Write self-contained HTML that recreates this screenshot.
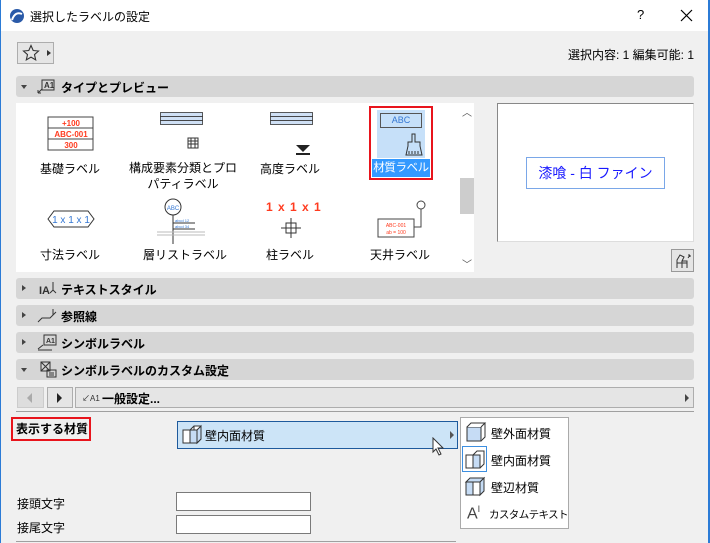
<!DOCTYPE html>
<html><head><meta charset="utf-8"><style>
*{box-sizing:border-box;margin:0;padding:0}
body{width:710px;height:543px;overflow:hidden;background:#f0f0f0;font-family:"Liberation Sans","Noto Sans CJK JP",sans-serif;font-size:12px;color:#000;position:relative}
.a{position:absolute;white-space:nowrap}
.hdr{position:absolute;left:16px;width:678px;height:21px;background:#d6d6d6;border-radius:3px;font-weight:bold;font-size:12px}
.hdr .t{position:absolute;left:45px;top:3px}
.tri{position:absolute;left:6px;top:7px;width:0;height:0}
.tr{border-left:4px solid #444;border-top:3.5px solid transparent;border-bottom:3.5px solid transparent}
.td{border-top:4px solid #444;border-left:3.5px solid transparent;border-right:3.5px solid transparent;top:9px;left:5px}
.lab{position:absolute;font-size:12px;text-align:center}
.inp{position:absolute;background:#fff;border:1px solid #7a7a7a}
</style></head><body>
<div class="a" style="left:0;top:0;width:710px;height:31px;background:#fff"></div>
<div class="a" style="left:0;top:0;width:1px;height:543px;background:#2b7bd6"></div>
<div class="a" style="left:708px;top:0;width:2px;height:543px;background:#2b7bd6"></div>
<svg class="a" style="left:9px;top:8px" width="16" height="16"><circle cx="8" cy="8" r="7" fill="#2a5aa8"/><path d="M3 12 Q6 3 13 6" stroke="#fff" stroke-width="2" fill="none"/></svg>
<div class="a" style="left:30px;top:8px;font-size:12px">選択したラベルの設定</div>
<div class="a" style="left:637px;top:7px;font-size:13px">?</div>
<svg class="a" style="left:680px;top:9px" width="13" height="13"><path d="M1 1l11 11M12 1L1 12" stroke="#000" stroke-width="1.2"/></svg>

<div class="a" style="left:17px;top:42px;width:37px;height:22px;border:1px solid #adadad;background:#e5e5e5"></div>
<svg class="a" style="left:22px;top:44px" width="18" height="18"><path d="M9 1.5l2.2 5 5.3.5-4 3.6 1.2 5.3L9 13.1l-4.7 2.8 1.2-5.3-4-3.6 5.3-.5z" fill="none" stroke="#333" stroke-width="1.1"/></svg>
<div class="a" style="left:47px;top:50px;border-left:4px solid #333;border-top:3px solid transparent;border-bottom:3px solid transparent"></div>
<div class="a" style="right:16px;top:46px;font-size:12px">選択内容: 1 編集可能: 1</div>

<div class="hdr" style="top:76px"><div class="tri td"></div>
<svg class="a" style="left:20px;top:2px" width="24" height="17"><path d="M6 2h12v10H6z" fill="none" stroke="#333"/><text x="8" y="10" font-size="8" fill="#333">A1</text><path d="M2 15l4-4M2 15h3M2 15v-3" stroke="#333" fill="none"/></svg>
<div class="t">タイプとプレビュー</div></div>

<div class="a" style="left:16px;top:103px;width:458px;height:169px;background:#fff"></div>
<div class="a" style="left:460px;top:178px;width:14px;height:36px;background:#cdcdcd"></div>
<div class="a" style="left:462px;top:104px;font-size:10px;color:#555">︿</div>
<div class="a" style="left:462px;top:256px;font-size:10px;color:#555">﹀</div>

<svg class="a" style="left:47px;top:116px" width="48" height="36"><g fill="none" stroke="#444" stroke-width="1"><rect x="1" y="1" width="45" height="33"/><line x1="1" y1="12" x2="46" y2="12"/><line x1="1" y1="23" x2="46" y2="23"/></g><g fill="#ff3b1f" font-size="8" font-family="Liberation Sans" text-anchor="middle" font-weight="bold"><text x="24" y="10">+100</text><text x="24" y="21">ABC-001</text><text x="24" y="32">300</text></g></svg>
<div class="lab" style="left:30px;top:160px;width:80px">基礎ラベル</div>
<svg class="a" style="left:160px;top:112px" width="44" height="40"><g fill="#cfe0f5" stroke="#333" stroke-width=".8"><rect x="0.5" y="0.5" width="42" height="4"/><rect x="0.5" y="4.5" width="42" height="4"/><rect x="0.5" y="8.5" width="42" height="4"/></g><rect x="28" y="26" width="10" height="10" fill="none" stroke="#333"/><path d="M28 29h10M28 32h10M31 26v10M35 26v10" stroke="#333"/></svg>
<div class="lab" style="left:128px;top:160px;width:110px;line-height:16px">構成要素分類とプロ<br>パティラベル</div>
<svg class="a" style="left:270px;top:112px" width="44" height="44"><g fill="#cfe0f5" stroke="#333" stroke-width=".8"><rect x="0.5" y="0.5" width="42" height="4"/><rect x="0.5" y="4.5" width="42" height="4"/><rect x="0.5" y="8.5" width="42" height="4"/></g><path d="M26 33h14l-7 7z" fill="#222"/><path d="M26 42h14" stroke="#222" stroke-width="2"/></svg>
<div class="lab" style="left:250px;top:160px;width:80px">高度ラベル</div>
<div class="a" style="left:369px;top:106px;width:64px;height:74px;border:2px solid #e8141c"></div>
<div class="a" style="left:377px;top:110px;width:48px;height:48px;background:#c6e0f9"></div>
<div class="a" style="left:380px;top:113px;width:42px;height:15px;border:1px solid #555;font-size:9px;color:#3477d3;text-align:center;line-height:13px">ABC</div>
<svg class="a" style="left:405px;top:133px" width="18" height="24"><path d="M7 1h3v8h5v4l2 9H1l2-9v-4h4z" fill="none" stroke="#333"/><path d="M4 18v3M7 18v3M10 18v3M13 18v3" stroke="#333"/></svg>
<div class="a" style="left:372px;top:159px;width:58px;height:18px;background:#3399ff;color:#fff;text-align:center;font-size:11.5px;letter-spacing:-0.4px;line-height:18px">材質ラベル</div>

<svg class="a" style="left:47px;top:210px" width="48" height="18"><path d="M1 9l6-8h34l6 8-6 8H7z" fill="none" stroke="#333"/><text x="24" y="13" font-size="10" fill="#3477d3" text-anchor="middle" font-family="Liberation Sans">1 x 1 x 1</text></svg>
<div class="lab" style="left:30px;top:246px;width:80px">寸法ラベル</div>
<svg class="a" style="left:155px;top:198px" width="50" height="46"><circle cx="18" cy="9" r="8" fill="none" stroke="#333"/><text x="18" y="12" font-size="6" text-anchor="middle" fill="#3477d3">ABC</text><path d="M18 17v29M18 25h22M18 31h22" stroke="#333"/><path d="M2 34h48M2 37h48" stroke="#bbb"/><text x="20" y="24" font-size="4" fill="#3477d3">abcd 12</text><text x="20" y="30" font-size="4" fill="#3477d3">abcd 34</text></svg>
<div class="lab" style="left:140px;top:246px;width:90px">層リストラベル</div>
<div class="a" style="left:266px;top:200px;font-size:12px;color:#ff3b1f;font-weight:bold;letter-spacing:1px">1 x 1 x 1</div>
<svg class="a" style="left:280px;top:217px" width="22" height="22"><rect x="6" y="6" width="10" height="10" fill="none" stroke="#333"/><path d="M11 1v20M1 11h20" stroke="#333"/></svg>
<div class="lab" style="left:250px;top:246px;width:80px">柱ラベル</div>
<svg class="a" style="left:376px;top:200px" width="52" height="40"><circle cx="45" cy="5" r="4" fill="none" stroke="#444"/><path d="M45 9v18h-7" stroke="#444" fill="none"/><rect x="2" y="19" width="36" height="18" fill="none" stroke="#444"/><text x="20" y="27" font-size="5" fill="#ff3b1f" text-anchor="middle">ABC-001</text><text x="20" y="34" font-size="5" fill="#ff3b1f" text-anchor="middle">ab = 100</text></svg>
<div class="lab" style="left:360px;top:246px;width:80px">天井ラベル</div>

<div class="a" style="left:497px;top:103px;width:197px;height:139px;background:#fff;border:1px solid #888;border-right-color:#ddd;border-bottom-color:#ddd"></div>
<div class="a" style="left:526px;top:157px;width:139px;height:32px;border:1px solid #7aa7e8;color:#1a1aff;font-size:14px;text-align:center;line-height:30px;background:#fff">漆喰 - 白 ファイン</div>
<div class="a" style="left:671px;top:249px;width:23px;height:23px;border:1px solid #999;background:#e5e5e5"></div>
<svg class="a" style="left:674px;top:252px" width="18" height="18"><path d="M3 16V8l3-5 4 2-2 4h5v7M8 9v7M3 11h10" fill="none" stroke="#333"/><path d="M14 6l2-3M16 3h-2M16 3v2" stroke="#333"/></svg>

<div class="hdr" style="top:278px"><div class="tri tr"></div><svg class="a" style="left:20px;top:2px" width="24" height="17"><text x="3" y="14" font-size="11" fill="#333">IA</text><path d="M17 2v8l-3 3M17 10l3 3" stroke="#333" fill="none"/></svg><div class="t">テキストスタイル</div></div>
<div class="hdr" style="top:305px"><div class="tri tr"></div><svg class="a" style="left:20px;top:2px" width="24" height="17"><path d="M2 15l4-4h8l3-3V2M17 8l3-3" stroke="#333" fill="none"/></svg><div class="t">参照線</div></div>
<div class="hdr" style="top:332px"><div class="tri tr"></div><svg class="a" style="left:20px;top:2px" width="24" height="17"><rect x="8" y="1" width="12" height="10" fill="none" stroke="#333"/><text x="10" y="9" font-size="7" fill="#333">A1</text><path d="M2 15l5-4M2 16h14" stroke="#333"/></svg><div class="t">シンボルラベル</div></div>
<div class="hdr" style="top:359px"><div class="tri td"></div><svg class="a" style="left:20px;top:2px" width="24" height="17"><rect x="5" y="1" width="9" height="9" fill="none" stroke="#333"/><path d="M5 1l9 9M14 1l-9 9" stroke="#333"/><rect x="11" y="9" width="9" height="7" fill="none" stroke="#333"/><path d="M13 12h5M13 14h5" stroke="#333"/></svg><div class="t">シンボルラベルのカスタム設定</div></div>

<div class="a" style="left:17px;top:387px;width:27px;height:21px;background:#ddd;border:1px solid #ccc"></div>
<div class="a" style="left:27px;top:393px;border-right:5px solid #aaa;border-top:5px solid transparent;border-bottom:5px solid transparent"></div>
<div class="a" style="left:47px;top:387px;width:26px;height:21px;background:#e5e5e5;border:1px solid #adadad"></div>
<div class="a" style="left:57px;top:393px;border-left:5px solid #222;border-top:5px solid transparent;border-bottom:5px solid transparent"></div>
<div class="a" style="left:75px;top:387px;width:619px;height:21px;background:#e5e5e5;border:1px solid #adadad"></div>
<div class="a" style="left:82px;top:393px;font-size:8px;color:#333">↙A1</div>
<div class="a" style="left:102px;top:390px;font-weight:bold">一般設定...</div>
<div class="a" style="left:685px;top:394px;border-left:4px solid #444;border-top:4px solid transparent;border-bottom:4px solid transparent"></div>
<div class="a" style="left:16px;top:411px;width:678px;height:1px;background:#a0a0a0"></div>

<div class="a" style="left:11px;top:417px;width:80px;height:24px;border:2px solid #e8141c"></div>
<div class="a" style="left:16px;top:420px;font-weight:bold">表示する材質</div>
<div class="a" style="left:177px;top:421px;width:281px;height:28px;background:#cce4f7;border:1px solid #1e5a9c"></div>
<svg class="a" style="left:181px;top:423px" width="22" height="22"><path d="M2 7h7v13H2zM9 7l4-4h7v13l-4 4M13 3v13" fill="#fff" stroke="#333"/><path d="M16 7l4-4v13l-4 4z" fill="#c6dcf5" stroke="#333"/><path d="M9 7h7v13H9z" fill="#c6dcf5" stroke="#333"/></svg>
<div class="a" style="left:205px;top:427px">壁内面材質</div>
<div class="a" style="left:450px;top:431px;border-left:4px solid #555;border-top:4px solid transparent;border-bottom:4px solid transparent"></div>
<svg class="a" style="left:432px;top:437px" width="14" height="20"><path d="M1 1v14l3-3 3 6 2-1-3-6h5z" fill="#fff" stroke="#333"/></svg>

<div class="a" style="left:460px;top:417px;width:109px;height:112px;background:#fff;border:1px solid #aaa"></div>
<svg class="a" style="left:465px;top:421px" width="22" height="22"><path d="M2 6h14v14H2z" fill="#c6dcf5" stroke="#333"/><path d="M2 6l4-4h14l-4 4M20 2v14l-4 4" fill="#fff" stroke="#333"/></svg>
<div class="a" style="left:491px;top:425px">壁外面材質</div>
<div class="a" style="left:462px;top:446px;width:25px;height:26px;border:1px solid #3d8fe0"></div>
<svg class="a" style="left:464px;top:448px" width="22" height="22"><path d="M2 7h7v13H2z" fill="#fff" stroke="#333"/><path d="M9 7l4-4h7v13l-4 4" fill="#fff" stroke="#333"/><path d="M9 7h7v13H9z" fill="#c6dcf5" stroke="#333"/></svg>
<div class="a" style="left:491px;top:452px">壁内面材質</div>
<svg class="a" style="left:464px;top:475px" width="22" height="22"><path d="M2 7l4-4h14l-4 4z" fill="#c6dcf5" stroke="#333"/><path d="M2 7h7v13H2z" fill="#c6dcf5" stroke="#333"/><path d="M9 7h7v13H9z" fill="#fff" stroke="#333"/><path d="M16 7l4-4v13l-4 4z" fill="#c6dcf5" stroke="#333"/></svg>
<div class="a" style="left:491px;top:479px">壁辺材質</div>
<div class="a" style="left:467px;top:504px;font-size:16px;color:#444;font-weight:300">A<sup style="font-size:9px">I</sup></div>
<div class="a" style="left:489px;top:507px;font-size:10.5px;letter-spacing:-0.6px">カスタムテキスト</div>

<div class="a" style="left:17px;top:495px">接頭文字</div>
<div class="inp" style="left:176px;top:492px;width:135px;height:19px"></div>
<div class="a" style="left:17px;top:519px">接尾文字</div>
<div class="inp" style="left:176px;top:515px;width:135px;height:19px"></div>
<div class="a" style="left:16px;top:541px;width:440px;height:1px;background:#a0a0a0"></div>
</body></html>
